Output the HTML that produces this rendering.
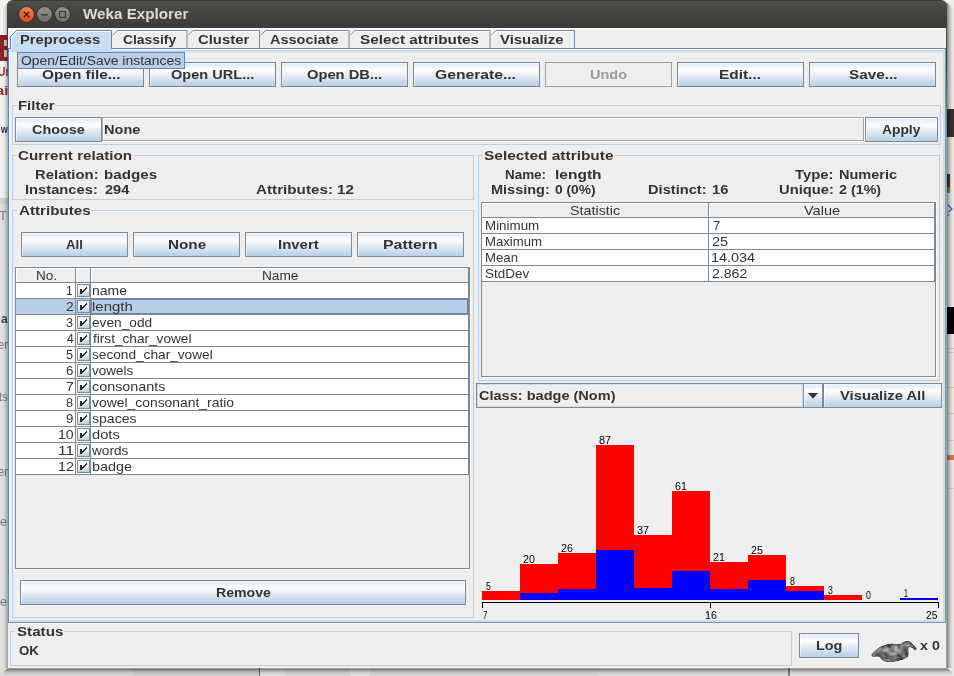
<!DOCTYPE html>
<html><head><meta charset="utf-8"><title>Weka Explorer</title>
<style>
html,body{margin:0;padding:0;}
body{width:954px;height:676px;position:relative;overflow:hidden;background:#f2f1f0;font-family:"Liberation Sans",sans-serif;}
div,span.t,svg{position:absolute;box-sizing:border-box;}
span.t{white-space:nowrap;line-height:20px;transform-origin:0 0;display:block;}
.btn{border:1px solid #7a8a99;background:linear-gradient(to bottom,#dde8f3 0%,#ffffff 30%,#dde8f3 60%,#b8cfe5 100%);}
.btn:after{content:"";position:absolute;left:0;top:0;right:0;bottom:0;border:1px solid rgba(255,255,255,.55);border-right-color:rgba(255,255,255,.0);border-bottom-color:rgba(255,255,255,0);}
.tb{border:1px solid #b8cfe5;}
</style></head><body>
<div style="left:0px;top:0px;width:954px;height:676px;background:#f3f2f1;"></div>
<div style="left:0px;top:198px;width:9px;height:6px;background:#d2d1cf;"></div>
<div style="left:0px;top:204px;width:9px;height:472px;background:#e1e0de;"></div>
<div style="left:0px;top:35px;width:9px;height:26px;background:#8b2626;"></div>
<div style="left:4px;top:40px;width:4px;height:6px;background:#d9c6c6;"></div>
<div style="left:4px;top:50px;width:4px;height:7px;background:#d9c6c6;"></div>
<span class="t" style="left:-2.49px;top:61.50px;font-size:13px;font-weight:bold;color:#9b2c2c;transform:scaleX(0.7926);">Ur</span>
<span class="t" style="left:-3.96px;top:80.50px;font-size:13px;font-weight:bold;color:#9b2c2c;transform:scaleX(1.1263);">ai</span>
<span class="t" style="left:0.60px;top:118.69px;font-size:11px;font-weight:bold;color:#2a2a4a;transform:scaleX(0.7882);">w</span>
<span class="t" style="left:-0.67px;top:206.34px;font-size:12px;font-weight:normal;color:#8a7a72;transform:scaleX(1.0667);">T</span>
<span class="t" style="left:0.64px;top:309.00px;font-size:13px;font-weight:bold;color:#444;transform:scaleX(0.9185);">a</span>
<span class="t" style="left:-1.83px;top:335.00px;font-size:13px;font-weight:normal;color:#777;transform:scaleX(0.8558);">er</span>
<span class="t" style="left:-1.12px;top:386.50px;font-size:13px;font-weight:normal;color:#777;transform:scaleX(0.8632);">ts</span>
<span class="t" style="left:-1.83px;top:461.50px;font-size:13px;font-weight:normal;color:#777;transform:scaleX(0.8558);">er</span>
<span class="t" style="left:0.10px;top:511.50px;font-size:13px;font-weight:normal;color:#777;transform:scaleX(0.9920);">e</span>
<span class="t" style="left:0.10px;top:592.00px;font-size:13px;font-weight:normal;color:#777;transform:scaleX(0.9920);">e</span>
<div style="left:946px;top:0px;width:8px;height:676px;background:#ececeb;"></div>
<div style="left:947px;top:109px;width:7px;height:28px;background:#333;"></div>
<div style="left:947px;top:174px;width:3px;height:7px;background:#1f3d7a;"></div>
<div style="left:947px;top:181px;width:3px;height:6px;background:#8b1a1a;"></div>
<div style="left:947px;top:187px;width:3px;height:6px;background:#5a9a2a;"></div>
<svg style="left:946px;top:204px" width="8" height="13" viewBox="0 0 8 13"><path d="M2 1 L6 5 L2.5 8 M2.5 10.5 v1.5" stroke="#3a5fae" stroke-width="1.2" fill="none"/></svg>
<div style="left:947px;top:307px;width:7px;height:27px;background:#000;"></div>
<div style="left:947px;top:348px;width:7px;height:1px;background:#cfcfce;"></div>
<div style="left:947px;top:352px;width:7px;height:1px;background:#cfcfce;"></div>
<div style="left:947px;top:387px;width:7px;height:1px;background:#cfcfce;"></div>
<div style="left:947px;top:413px;width:7px;height:1px;background:#cfcfce;"></div>
<div style="left:947px;top:440px;width:7px;height:1px;background:#cfcfce;"></div>
<div style="left:947px;top:488px;width:7px;height:1px;background:#cfcfce;"></div>
<div style="left:947px;top:455px;width:7px;height:5px;background:#e07848;"></div>
<div style="left:0px;top:668px;width:954px;height:8px;background:#dcdbda;"></div>
<div style="left:133px;top:668px;width:126px;height:8px;background:#d6d5d4;"></div>
<div style="left:259px;top:668px;width:1px;height:8px;background:#6a6a6a;"></div>
<div style="left:260px;top:668px;width:25px;height:8px;background:#e6e5e4;"></div>
<div style="left:350px;top:668px;width:20px;height:8px;background:#e6e5e4;"></div>
<div style="left:598px;top:668px;width:190px;height:8px;background:#e2e1e0;"></div>
<div style="left:788px;top:668px;width:2px;height:8px;background:#8a8988;"></div>
<div style="left:790px;top:668px;width:164px;height:8px;background:#e9e8e7;"></div>
<div style="left:7px;top:3px;width:1px;height:665px;background:rgba(0,0,0,0.25);"></div>
<div style="left:6px;top:4px;width:1px;height:664px;background:rgba(0,0,0,0.2);"></div>
<div style="left:5px;top:5px;width:1px;height:663px;background:rgba(0,0,0,0.12);"></div>
<div style="left:4px;top:6px;width:1px;height:662px;background:rgba(0,0,0,0.06);"></div>
<div style="left:3px;top:7px;width:1px;height:661px;background:rgba(0,0,0,0.03);"></div>
<div style="left:946px;top:3px;width:1px;height:665px;background:rgba(0,0,0,0.3);"></div>
<div style="left:947px;top:3px;width:1px;height:665px;background:rgba(0,0,0,0.41);"></div>
<div style="left:948px;top:4px;width:1px;height:664px;background:rgba(0,0,0,0.3);"></div>
<div style="left:949px;top:5px;width:1px;height:663px;background:rgba(0,0,0,0.21);"></div>
<div style="left:950px;top:6px;width:1px;height:662px;background:rgba(0,0,0,0.14);"></div>
<div style="left:951px;top:7px;width:1px;height:661px;background:rgba(0,0,0,0.08);"></div>
<div style="left:952px;top:8px;width:1px;height:660px;background:rgba(0,0,0,0.04);"></div>
<div style="left:953px;top:9px;width:1px;height:659px;background:rgba(0,0,0,0.015);"></div>
<div style="left:7px;top:668px;width:941px;height:1px;background:rgba(0,0,0,0.28);"></div>
<div style="left:6px;top:669px;width:943px;height:1px;background:rgba(0,0,0,0.42);"></div>
<div style="left:5px;top:670px;width:945px;height:1px;background:rgba(0,0,0,0.3);"></div>
<div style="left:4px;top:671px;width:947px;height:1px;background:rgba(0,0,0,0.2);"></div>
<div style="left:4px;top:672px;width:948px;height:1px;background:rgba(0,0,0,0.13);"></div>
<div style="left:4px;top:673px;width:949px;height:1px;background:rgba(0,0,0,0.08);"></div>
<div style="left:4px;top:674px;width:949px;height:1px;background:rgba(0,0,0,0.04);"></div>
<div style="left:4px;top:675px;width:949px;height:1px;background:rgba(0,0,0,0.02);"></div>
<div style="left:7px;top:0;width:940px;height:28px;border-radius:6px 6px 0 0;background:linear-gradient(to bottom,#4f4e49 0%,#474641 30%,#3c3b37 100%);border-top:1px solid #3a3935;"></div>
<div style="left:8px;top:28px;width:938px;height:640px;background:#eeeeee;"></div>
<div style="left:8px;top:28px;width:938px;height:2px;background:#fafafa;"></div>
<div style="left:945px;top:28px;width:1px;height:20px;background:#fbfbfb;"></div>
<div style="left:946px;top:27px;width:1px;height:120px;background:linear-gradient(to bottom,#46443f 0%,#46443f 30%,rgba(70,68,63,0) 100%);"></div>
<div style="left:7px;top:27px;width:1px;height:60px;background:linear-gradient(to bottom,#46443f 0%,#46443f 40%,rgba(70,68,63,0) 100%);"></div>
<svg style="left:16px;top:4px" width="60" height="22" viewBox="0 0 60 22"><defs><linearGradient id="gc" x1="0" y1="0" x2="0" y2="1"><stop offset="0" stop-color="#f37f52"/><stop offset="1" stop-color="#de4c1b"/></linearGradient><linearGradient id="gg" x1="0" y1="0" x2="0" y2="1"><stop offset="0" stop-color="#97958e"/><stop offset="1" stop-color="#6d6b65"/></linearGradient></defs><circle cx="10.5" cy="10.6" r="8.2" fill="#2f2e2a"/><circle cx="10.5" cy="10.5" r="7.4" fill="url(#gc)"/><path d="M7.8 7.8 L13.2 13.2 M13.2 7.8 L7.8 13.2" stroke="#3a1b10" stroke-width="1.25" fill="none"/><circle cx="28.5" cy="10.6" r="8.2" fill="#2f2e2a"/><circle cx="28.5" cy="10.5" r="7.4" fill="url(#gg)"/><path d="M25.3 10.8 H31.7" stroke="#3c3b37" stroke-width="1.4"/><circle cx="46.5" cy="10.6" r="8.2" fill="#2f2e2a"/><circle cx="46.5" cy="10.5" r="7.4" fill="url(#gg)"/><rect x="43.6" y="7.6" width="5.8" height="5.8" fill="none" stroke="#3c3b37" stroke-width="1.2"/></svg>
<span class="t" style="left:82.90px;top:4.30px;font-size:15px;font-weight:bold;color:#dfdbd2;transform:scaleX(1.0130);">Weka Explorer</span>
<div style="left:8px;top:48px;width:938px;height:575px;border:1px solid #6382bf;"></div>
<div style="left:9px;top:49px;width:936px;height:573px;border-top:3px solid #c8ddf2;border-right:2px solid #c8ddf2;border-bottom:2px solid #c8ddf2;border-left:1px solid #fff;"></div>
<div style="left:9px;top:49px;width:3px;height:1px;background:#fff;"></div>
<div style="left:112px;top:49px;width:832px;height:1px;background:#fff;"></div>
<div style="left:8px;top:622px;width:938px;height:1px;background:#8496ae;"></div>
<div style="left:945px;top:49px;width:1px;height:574px;background:#8496ae;"></div>
<svg style="left:0;top:28px" width="600" height="24" viewBox="0 28 600 24"><path d="M10.5 52 V36.5 L16.5 30.5 H111.5 V52 Z" fill="#c8ddf2" stroke="none"/><path d="M11.5 48.5 V37 L17 31.5 H111" fill="none" stroke="#fff" stroke-width="1"/><path d="M10.5 49 V36.5 L16.5 30.5 H111.5 V48.5" fill="none" stroke="#6382bf" stroke-width="1"/><path d="M113.5 36 L118 31.5 H186.5" fill="none" stroke="#fff" stroke-width="1"/><path d="M112.5 35.5 L117.5 30.5 H187.0 V48" fill="none" stroke="#7a8a99" stroke-width="1"/><path d="M189.0 36 L193.5 31.5 H259" fill="none" stroke="#fff" stroke-width="1"/><path d="M188.0 35.5 L193.0 30.5 H259.5 V48" fill="none" stroke="#7a8a99" stroke-width="1"/><path d="M261.5 36 L266 31.5 H348.5" fill="none" stroke="#fff" stroke-width="1"/><path d="M260.5 35.5 L265.5 30.5 H349.0 V48" fill="none" stroke="#7a8a99" stroke-width="1"/><path d="M351.0 36 L355.5 31.5 H489.5" fill="none" stroke="#fff" stroke-width="1"/><path d="M350.0 35.5 L355.0 30.5 H490.0 V48" fill="none" stroke="#7a8a99" stroke-width="1"/><path d="M492.0 36 L496.5 31.5 H574" fill="none" stroke="#fff" stroke-width="1"/><path d="M491.0 35.5 L496.0 30.5 H574.5 V48" fill="none" stroke="#7a8a99" stroke-width="1"/></svg>
<span class="t" style="left:20.05px;top:29.50px;font-size:13px;font-weight:bold;color:#333;transform:scaleX(1.1309);">Preprocess</span>
<span class="t" style="left:122.97px;top:29.50px;font-size:13px;font-weight:bold;color:#333;transform:scaleX(1.0660);">Classify</span>
<span class="t" style="left:198.03px;top:29.50px;font-size:13px;font-weight:bold;color:#333;transform:scaleX(1.1432);">Cluster</span>
<span class="t" style="left:269.62px;top:29.50px;font-size:13px;font-weight:bold;color:#333;transform:scaleX(1.1144);">Associate</span>
<span class="t" style="left:360.01px;top:29.50px;font-size:13px;font-weight:bold;color:#333;transform:scaleX(1.1770);">Select attributes</span>
<span class="t" style="left:500.31px;top:29.50px;font-size:13px;font-weight:bold;color:#333;transform:scaleX(1.1452);">Visualize</span>
<div class="btn" style="left:17px;top:62px;width:127px;height:25px;"></div>
<span class="t" style="left:41.51px;top:64.50px;font-size:13px;font-weight:bold;color:#333;transform:scaleX(1.1831);">Open file...</span>
<div class="btn" style="left:149px;top:62px;width:127px;height:25px;"></div>
<span class="t" style="left:171.04px;top:64.50px;font-size:13px;font-weight:bold;color:#333;transform:scaleX(1.1192);">Open URL...</span>
<div class="btn" style="left:281px;top:62px;width:127px;height:25px;"></div>
<span class="t" style="left:306.63px;top:64.50px;font-size:13px;font-weight:bold;color:#333;transform:scaleX(1.1308);">Open DB...</span>
<div class="btn" style="left:413px;top:62px;width:127px;height:25px;"></div>
<span class="t" style="left:435.00px;top:64.50px;font-size:13px;font-weight:bold;color:#333;transform:scaleX(1.2046);">Generate...</span>
<div style="left:545px;top:62px;width:127px;height:25px;background:#eeeeee;border:1px solid #9aa0a6;"></div>
<span class="t" style="left:589.76px;top:64.50px;font-size:13px;font-weight:bold;color:#999;transform:scaleX(1.1156);">Undo</span>
<div class="btn" style="left:677px;top:62px;width:127px;height:25px;"></div>
<span class="t" style="left:719.21px;top:64.50px;font-size:13px;font-weight:bold;color:#333;transform:scaleX(1.1852);">Edit...</span>
<div class="btn" style="left:809px;top:62px;width:127px;height:25px;"></div>
<span class="t" style="left:848.61px;top:64.50px;font-size:13px;font-weight:bold;color:#333;transform:scaleX(1.1748);">Save...</span>
<div style="left:17px;top:52px;width:168px;height:17px;background:#b8cfe5;border:1px solid #6382bf;"></div>
<span class="t" style="left:21.30px;top:50.50px;font-size:13px;font-weight:normal;color:#333;transform:scaleX(1.0705);">Open/Edit/Save instances</span>
<div class="tb" style="left:12px;top:105px;width:929px;height:40px;"></div>
<div style="left:17px;top:98px;width:38px;height:14px;background:#eee;"></div>
<span class="t" style="left:18.14px;top:95.50px;font-size:13px;font-weight:bold;color:#333;transform:scaleX(1.1480);">Filter</span>
<div class="btn" style="left:15px;top:117px;width:87px;height:25px;"></div>
<span class="t" style="left:31.75px;top:119.50px;font-size:13px;font-weight:bold;color:#333;transform:scaleX(1.1059);">Choose</span>
<div style="left:103px;top:118px;width:762px;height:24px;border:1px solid #fff;"></div>
<div style="left:102px;top:117px;width:762px;height:24px;border:1px solid #a3a3a3;"></div>
<span class="t" style="left:103.76px;top:119.50px;font-size:13px;font-weight:bold;color:#333;transform:scaleX(1.1200);">None</span>
<div class="btn" style="left:865px;top:117px;width:73px;height:25px;"></div>
<span class="t" style="left:882.33px;top:119.50px;font-size:13px;font-weight:bold;color:#333;transform:scaleX(1.0629);">Apply</span>
<div class="tb" style="left:12px;top:155px;width:462px;height:45px;"></div>
<div style="left:17px;top:148px;width:116px;height:14px;background:#eee;"></div>
<span class="t" style="left:18.42px;top:145.50px;font-size:13px;font-weight:bold;color:#333;transform:scaleX(1.1699);">Current relation</span>
<span class="t" style="left:34.94px;top:164.50px;font-size:13px;font-weight:bold;color:#333;transform:scaleX(1.1442);">Relation:</span>
<span class="t" style="left:104.22px;top:164.50px;font-size:13px;font-weight:bold;color:#333;transform:scaleX(1.1684);">badges</span>
<span class="t" style="left:24.95px;top:180.00px;font-size:13px;font-weight:bold;color:#333;transform:scaleX(1.1325);">Instances:</span>
<span class="t" style="left:104.54px;top:180.00px;font-size:13px;font-weight:bold;color:#333;transform:scaleX(1.1190);">294</span>
<span class="t" style="left:255.51px;top:180.00px;font-size:13px;font-weight:bold;color:#333;transform:scaleX(1.1720);">Attributes:</span>
<span class="t" style="left:336.72px;top:180.00px;font-size:13px;font-weight:bold;color:#333;transform:scaleX(1.1698);">12</span>
<div class="tb" style="left:12px;top:210px;width:462px;height:408px;"></div>
<div style="left:17px;top:203px;width:74px;height:14px;background:#eee;"></div>
<span class="t" style="left:18.71px;top:200.50px;font-size:13px;font-weight:bold;color:#333;transform:scaleX(1.1669);">Attributes</span>
<div class="btn" style="left:21px;top:232px;width:107px;height:25px;"></div>
<span class="t" style="left:66.35px;top:234.50px;font-size:13px;font-weight:bold;color:#333;transform:scaleX(1.0129);">All</span>
<div class="btn" style="left:133px;top:232px;width:107px;height:25px;"></div>
<span class="t" style="left:167.72px;top:234.50px;font-size:13px;font-weight:bold;color:#333;transform:scaleX(1.1744);">None</span>
<div class="btn" style="left:245px;top:232px;width:107px;height:25px;"></div>
<span class="t" style="left:277.74px;top:234.50px;font-size:13px;font-weight:bold;color:#333;transform:scaleX(1.1507);">Invert</span>
<div class="btn" style="left:357px;top:232px;width:107px;height:25px;"></div>
<span class="t" style="left:382.69px;top:234.50px;font-size:13px;font-weight:bold;color:#333;transform:scaleX(1.2185);">Pattern</span>
<div style="left:16px;top:268px;width:455px;height:302px;border:1px solid #fbfbfb;"></div>
<div style="left:15px;top:267px;width:455px;height:302px;background:#eee;border:1px solid #7a8a99;"></div>
<div style="left:16px;top:268px;width:453px;height:15px;background:#eee;"></div>
<div style="left:16px;top:283px;width:453px;height:15px;background:#fff;"></div>
<div style="left:16px;top:298px;width:453px;height:1px;background:#7a8a99;"></div>
<div style="left:16px;top:299px;width:453px;height:15px;background:#b8cfe5;"></div>
<div style="left:16px;top:314px;width:453px;height:1px;background:#7a8a99;"></div>
<div style="left:16px;top:315px;width:453px;height:15px;background:#fff;"></div>
<div style="left:16px;top:330px;width:453px;height:1px;background:#7a8a99;"></div>
<div style="left:16px;top:331px;width:453px;height:15px;background:#fff;"></div>
<div style="left:16px;top:346px;width:453px;height:1px;background:#7a8a99;"></div>
<div style="left:16px;top:347px;width:453px;height:15px;background:#fff;"></div>
<div style="left:16px;top:362px;width:453px;height:1px;background:#7a8a99;"></div>
<div style="left:16px;top:363px;width:453px;height:15px;background:#fff;"></div>
<div style="left:16px;top:378px;width:453px;height:1px;background:#7a8a99;"></div>
<div style="left:16px;top:379px;width:453px;height:15px;background:#fff;"></div>
<div style="left:16px;top:394px;width:453px;height:1px;background:#7a8a99;"></div>
<div style="left:16px;top:395px;width:453px;height:15px;background:#fff;"></div>
<div style="left:16px;top:410px;width:453px;height:1px;background:#7a8a99;"></div>
<div style="left:16px;top:411px;width:453px;height:15px;background:#fff;"></div>
<div style="left:16px;top:426px;width:453px;height:1px;background:#7a8a99;"></div>
<div style="left:16px;top:427px;width:453px;height:15px;background:#fff;"></div>
<div style="left:16px;top:442px;width:453px;height:1px;background:#7a8a99;"></div>
<div style="left:16px;top:443px;width:453px;height:15px;background:#fff;"></div>
<div style="left:16px;top:458px;width:453px;height:1px;background:#7a8a99;"></div>
<div style="left:16px;top:459px;width:453px;height:15px;background:#fff;"></div>
<div style="left:16px;top:474px;width:453px;height:1px;background:#7a8a99;"></div>
<div style="left:16px;top:282px;width:453px;height:1px;background:#7a8a99;"></div>
<div style="left:75px;top:268px;width:1px;height:207px;background:#7a8a99;"></div>
<div style="left:90px;top:268px;width:1px;height:207px;background:#7a8a99;"></div>
<div style="left:468px;top:268px;width:1px;height:207px;background:#7a8a99;"></div>
<div style="left:16px;top:268px;width:59px;height:1px;background:#fff;"></div>
<div style="left:76px;top:268px;width:14px;height:1px;background:#fff;"></div>
<div style="left:91px;top:268px;width:377px;height:1px;background:#fff;"></div>
<div style="left:16px;top:268px;width:1px;height:14px;background:#fff;"></div>
<div style="left:76px;top:268px;width:1px;height:14px;background:#fff;"></div>
<div style="left:91px;top:268px;width:1px;height:14px;background:#fff;"></div>
<span class="t" style="left:36.06px;top:265.80px;font-size:13px;font-weight:normal;color:#333;transform:scaleX(1.0389);">No.</span>
<span class="t" style="left:261.55px;top:265.80px;font-size:13px;font-weight:normal;color:#333;transform:scaleX(1.0515);">Name</span>
<div class="btn" style="left:77px;top:284px;width:13px;height:13px;"></div>
<svg style="left:77px;top:284px" width="13" height="13" viewBox="0 0 13 13" shape-rendering="crispEdges"><path d="M3 5h2v5h-2z M5 7h1v2h-1z M6 6h1v2h-1z M7 5h1v2h-1z M8 4h1v2h-1z M9 3h1v2h-1z" fill="#2a2a2a"/></svg>
<div class="btn" style="left:77px;top:300px;width:13px;height:13px;"></div>
<svg style="left:77px;top:300px" width="13" height="13" viewBox="0 0 13 13" shape-rendering="crispEdges"><path d="M3 5h2v5h-2z M5 7h1v2h-1z M6 6h1v2h-1z M7 5h1v2h-1z M8 4h1v2h-1z M9 3h1v2h-1z" fill="#2a2a2a"/></svg>
<div class="btn" style="left:77px;top:316px;width:13px;height:13px;"></div>
<svg style="left:77px;top:316px" width="13" height="13" viewBox="0 0 13 13" shape-rendering="crispEdges"><path d="M3 5h2v5h-2z M5 7h1v2h-1z M6 6h1v2h-1z M7 5h1v2h-1z M8 4h1v2h-1z M9 3h1v2h-1z" fill="#2a2a2a"/></svg>
<div class="btn" style="left:77px;top:332px;width:13px;height:13px;"></div>
<svg style="left:77px;top:332px" width="13" height="13" viewBox="0 0 13 13" shape-rendering="crispEdges"><path d="M3 5h2v5h-2z M5 7h1v2h-1z M6 6h1v2h-1z M7 5h1v2h-1z M8 4h1v2h-1z M9 3h1v2h-1z" fill="#2a2a2a"/></svg>
<div class="btn" style="left:77px;top:348px;width:13px;height:13px;"></div>
<svg style="left:77px;top:348px" width="13" height="13" viewBox="0 0 13 13" shape-rendering="crispEdges"><path d="M3 5h2v5h-2z M5 7h1v2h-1z M6 6h1v2h-1z M7 5h1v2h-1z M8 4h1v2h-1z M9 3h1v2h-1z" fill="#2a2a2a"/></svg>
<div class="btn" style="left:77px;top:364px;width:13px;height:13px;"></div>
<svg style="left:77px;top:364px" width="13" height="13" viewBox="0 0 13 13" shape-rendering="crispEdges"><path d="M3 5h2v5h-2z M5 7h1v2h-1z M6 6h1v2h-1z M7 5h1v2h-1z M8 4h1v2h-1z M9 3h1v2h-1z" fill="#2a2a2a"/></svg>
<div class="btn" style="left:77px;top:380px;width:13px;height:13px;"></div>
<svg style="left:77px;top:380px" width="13" height="13" viewBox="0 0 13 13" shape-rendering="crispEdges"><path d="M3 5h2v5h-2z M5 7h1v2h-1z M6 6h1v2h-1z M7 5h1v2h-1z M8 4h1v2h-1z M9 3h1v2h-1z" fill="#2a2a2a"/></svg>
<div class="btn" style="left:77px;top:396px;width:13px;height:13px;"></div>
<svg style="left:77px;top:396px" width="13" height="13" viewBox="0 0 13 13" shape-rendering="crispEdges"><path d="M3 5h2v5h-2z M5 7h1v2h-1z M6 6h1v2h-1z M7 5h1v2h-1z M8 4h1v2h-1z M9 3h1v2h-1z" fill="#2a2a2a"/></svg>
<div class="btn" style="left:77px;top:412px;width:13px;height:13px;"></div>
<svg style="left:77px;top:412px" width="13" height="13" viewBox="0 0 13 13" shape-rendering="crispEdges"><path d="M3 5h2v5h-2z M5 7h1v2h-1z M6 6h1v2h-1z M7 5h1v2h-1z M8 4h1v2h-1z M9 3h1v2h-1z" fill="#2a2a2a"/></svg>
<div class="btn" style="left:77px;top:428px;width:13px;height:13px;"></div>
<svg style="left:77px;top:428px" width="13" height="13" viewBox="0 0 13 13" shape-rendering="crispEdges"><path d="M3 5h2v5h-2z M5 7h1v2h-1z M6 6h1v2h-1z M7 5h1v2h-1z M8 4h1v2h-1z M9 3h1v2h-1z" fill="#2a2a2a"/></svg>
<div class="btn" style="left:77px;top:444px;width:13px;height:13px;"></div>
<svg style="left:77px;top:444px" width="13" height="13" viewBox="0 0 13 13" shape-rendering="crispEdges"><path d="M3 5h2v5h-2z M5 7h1v2h-1z M6 6h1v2h-1z M7 5h1v2h-1z M8 4h1v2h-1z M9 3h1v2h-1z" fill="#2a2a2a"/></svg>
<div class="btn" style="left:77px;top:460px;width:13px;height:13px;"></div>
<svg style="left:77px;top:460px" width="13" height="13" viewBox="0 0 13 13" shape-rendering="crispEdges"><path d="M3 5h2v5h-2z M5 7h1v2h-1z M6 6h1v2h-1z M7 5h1v2h-1z M8 4h1v2h-1z M9 3h1v2h-1z" fill="#2a2a2a"/></svg>
<div style="left:91px;top:299px;width:377px;height:15px;border:1px solid #6382bf;"></div>
<span class="t" style="left:66.27px;top:280.50px;font-size:13px;font-weight:normal;color:#333;transform:scaleX(0.9273);">1</span>
<span class="t" style="left:66.00px;top:296.50px;font-size:13px;font-weight:normal;color:#333;transform:scaleX(1.0609);">2</span>
<span class="t" style="left:66.31px;top:312.50px;font-size:13px;font-weight:normal;color:#333;transform:scaleX(0.9760);">3</span>
<span class="t" style="left:66.57px;top:328.50px;font-size:13px;font-weight:normal;color:#333;transform:scaleX(0.9385);">4</span>
<span class="t" style="left:66.31px;top:344.50px;font-size:13px;font-weight:normal;color:#333;transform:scaleX(0.9760);">5</span>
<span class="t" style="left:66.04px;top:360.50px;font-size:13px;font-weight:normal;color:#333;transform:scaleX(1.0167);">6</span>
<span class="t" style="left:66.00px;top:376.50px;font-size:13px;font-weight:normal;color:#333;transform:scaleX(1.0609);">7</span>
<span class="t" style="left:66.31px;top:392.50px;font-size:13px;font-weight:normal;color:#333;transform:scaleX(0.9760);">8</span>
<span class="t" style="left:66.29px;top:408.50px;font-size:13px;font-weight:normal;color:#333;transform:scaleX(1.0167);">9</span>
<span class="t" style="left:57.72px;top:424.50px;font-size:13px;font-weight:normal;color:#333;transform:scaleX(1.0846);">10</span>
<span class="t" style="left:57.60px;top:440.50px;font-size:13px;font-weight:normal;color:#333;transform:scaleX(1.2000);">11</span>
<span class="t" style="left:57.69px;top:456.50px;font-size:13px;font-weight:normal;color:#333;transform:scaleX(1.1059);">12</span>
<span class="t" style="left:91.73px;top:280.50px;font-size:13px;font-weight:normal;color:#333;transform:scaleX(1.0742);">name</span>
<span class="t" style="left:91.65px;top:296.50px;font-size:13px;font-weight:normal;color:#333;transform:scaleX(1.1493);">length</span>
<span class="t" style="left:92.27px;top:312.50px;font-size:13px;font-weight:normal;color:#333;transform:scaleX(1.0529);">even_odd</span>
<span class="t" style="left:92.54px;top:328.50px;font-size:13px;font-weight:normal;color:#333;transform:scaleX(1.0480);">first_char_vowel</span>
<span class="t" style="left:92.37px;top:344.50px;font-size:13px;font-weight:normal;color:#333;transform:scaleX(1.0502);">second_char_vowel</span>
<span class="t" style="left:91.94px;top:360.50px;font-size:13px;font-weight:normal;color:#333;transform:scaleX(1.0359);">vowels</span>
<span class="t" style="left:92.35px;top:376.50px;font-size:13px;font-weight:normal;color:#333;transform:scaleX(1.1053);">consonants</span>
<span class="t" style="left:91.93px;top:392.50px;font-size:13px;font-weight:normal;color:#333;transform:scaleX(1.0684);">vowel_consonant_ratio</span>
<span class="t" style="left:92.36px;top:408.50px;font-size:13px;font-weight:normal;color:#333;transform:scaleX(1.0807);">spaces</span>
<span class="t" style="left:92.33px;top:424.50px;font-size:13px;font-weight:normal;color:#333;transform:scaleX(1.1319);">dots</span>
<span class="t" style="left:92.40px;top:440.50px;font-size:13px;font-weight:normal;color:#333;transform:scaleX(1.0482);">words</span>
<span class="t" style="left:92.07px;top:456.50px;font-size:13px;font-weight:normal;color:#333;transform:scaleX(1.1079);">badge</span>
<div class="btn" style="left:20px;top:580px;width:446px;height:25px;"></div>
<span class="t" style="left:215.79px;top:582.50px;font-size:13px;font-weight:bold;color:#333;transform:scaleX(1.0848);">Remove</span>
<div class="tb" style="left:478px;top:155px;width:462px;height:226px;"></div>
<div style="left:483px;top:148px;width:132px;height:14px;background:#eee;"></div>
<span class="t" style="left:484.01px;top:145.50px;font-size:13px;font-weight:bold;color:#333;transform:scaleX(1.1871);">Selected attribute</span>
<span class="t" style="left:505.03px;top:164.50px;font-size:13px;font-weight:bold;color:#333;transform:scaleX(1.0331);">Name:</span>
<span class="t" style="left:554.91px;top:164.50px;font-size:13px;font-weight:bold;color:#333;transform:scaleX(1.1946);">length</span>
<span class="t" style="left:795.31px;top:164.50px;font-size:13px;font-weight:bold;color:#333;transform:scaleX(1.1442);">Type:</span>
<span class="t" style="left:838.76px;top:164.50px;font-size:13px;font-weight:bold;color:#333;transform:scaleX(1.1172);">Numeric</span>
<span class="t" style="left:491.17px;top:180.00px;font-size:13px;font-weight:bold;color:#333;transform:scaleX(1.1133);">Missing:</span>
<span class="t" style="left:555.37px;top:180.00px;font-size:13px;font-weight:bold;color:#333;transform:scaleX(1.0595);">0 (0%)</span>
<span class="t" style="left:648.36px;top:180.00px;font-size:13px;font-weight:bold;color:#333;transform:scaleX(1.1260);">Distinct:</span>
<span class="t" style="left:711.75px;top:180.00px;font-size:13px;font-weight:bold;color:#333;transform:scaleX(1.1321);">16</span>
<span class="t" style="left:778.75px;top:180.00px;font-size:13px;font-weight:bold;color:#333;transform:scaleX(1.1333);">Unique:</span>
<span class="t" style="left:839.05px;top:180.00px;font-size:13px;font-weight:bold;color:#333;transform:scaleX(1.1000);">2 (1%)</span>
<div style="left:482px;top:203px;width:455px;height:175px;border:1px solid #fbfbfb;"></div>
<div style="left:481px;top:202px;width:455px;height:175px;background:#eee;border:1px solid #7a8a99;"></div>
<div style="left:482px;top:218px;width:453px;height:15px;background:#fff;"></div>
<div style="left:482px;top:233px;width:453px;height:1px;background:#7a8a99;"></div>
<div style="left:482px;top:234px;width:453px;height:15px;background:#fff;"></div>
<div style="left:482px;top:249px;width:453px;height:1px;background:#7a8a99;"></div>
<div style="left:482px;top:250px;width:453px;height:15px;background:#fff;"></div>
<div style="left:482px;top:265px;width:453px;height:1px;background:#7a8a99;"></div>
<div style="left:482px;top:266px;width:453px;height:15px;background:#fff;"></div>
<div style="left:482px;top:281px;width:453px;height:1px;background:#7a8a99;"></div>
<div style="left:482px;top:217px;width:453px;height:1px;background:#7a8a99;"></div>
<div style="left:708px;top:203px;width:1px;height:79px;background:#7a8a99;"></div>
<div style="left:934px;top:203px;width:1px;height:79px;background:#7a8a99;"></div>
<div style="left:482px;top:203px;width:226px;height:1px;background:#fff;"></div>
<div style="left:709px;top:203px;width:225px;height:1px;background:#fff;"></div>
<div style="left:482px;top:203px;width:1px;height:14px;background:#fff;"></div>
<div style="left:709px;top:203px;width:1px;height:14px;background:#fff;"></div>
<span class="t" style="left:570.27px;top:200.80px;font-size:13px;font-weight:normal;color:#333;transform:scaleX(1.1006);">Statistic</span>
<span class="t" style="left:804.32px;top:200.80px;font-size:13px;font-weight:normal;color:#333;transform:scaleX(1.1175);">Value</span>
<span class="t" style="left:485.07px;top:216.00px;font-size:13px;font-weight:normal;color:#333;transform:scaleX(1.0286);">Minimum</span>
<span class="t" style="left:712.86px;top:216.00px;font-size:13px;font-weight:normal;color:#333;transform:scaleX(0.9913);">7</span>
<span class="t" style="left:485.09px;top:232.00px;font-size:13px;font-weight:normal;color:#333;transform:scaleX(1.0128);">Maximum</span>
<span class="t" style="left:711.77px;top:232.00px;font-size:13px;font-weight:normal;color:#333;transform:scaleX(1.1094);">25</span>
<span class="t" style="left:485.09px;top:248.00px;font-size:13px;font-weight:normal;color:#333;transform:scaleX(1.0146);">Mean</span>
<span class="t" style="left:711.49px;top:248.00px;font-size:13px;font-weight:normal;color:#333;transform:scaleX(1.1091);">14.034</span>
<span class="t" style="left:485.32px;top:264.00px;font-size:13px;font-weight:normal;color:#333;transform:scaleX(1.0347);">StdDev</span>
<span class="t" style="left:711.79px;top:264.00px;font-size:13px;font-weight:normal;color:#333;transform:scaleX(1.0848);">2.862</span>
<div style="left:476px;top:383px;width:347px;height:25px;background:#eee;border:1px solid #7a8a99;"></div>
<div style="left:477px;top:384px;width:326px;height:23px;background:#eee;border:1px solid #cbdcee;"></div>
<div class="btn" style="left:803px;top:383px;width:20px;height:25px;"></div>
<svg style="left:807px;top:392px" width="12" height="8" viewBox="0 0 12 8"><path d="M0.8 1 H11.2 L6 6.4 Z" fill="#333"/></svg>
<span class="t" style="left:478.94px;top:385.80px;font-size:13px;font-weight:bold;color:#333;transform:scaleX(1.1182);">Class: badge (Nom)</span>
<div class="btn" style="left:823px;top:383px;width:119px;height:25px;"></div>
<span class="t" style="left:840.42px;top:385.80px;font-size:13px;font-weight:bold;color:#333;transform:scaleX(1.1351);">Visualize All</span>
<div style="left:482px;top:591px;width:38px;height:9px;background:#ff0000;"></div>
<span class="t" style="left:485.87px;top:576.97px;font-size:10.2px;font-weight:normal;color:#000;transform:scaleX(0.8632);">5</span>
<div style="left:520px;top:564px;width:38px;height:36px;background:#ff0000;"></div>
<div style="left:520px;top:593px;width:38px;height:7px;background:#0000ff;"></div>
<span class="t" style="left:523.18px;top:549.97px;font-size:10.2px;font-weight:normal;color:#000;transform:scaleX(1.0476);">20</span>
<div style="left:558px;top:553px;width:38px;height:47px;background:#ff0000;"></div>
<div style="left:558px;top:589px;width:38px;height:11px;background:#0000ff;"></div>
<span class="t" style="left:561.18px;top:538.97px;font-size:10.2px;font-weight:normal;color:#000;transform:scaleX(1.0476);">26</span>
<div style="left:596px;top:445px;width:38px;height:155px;background:#ff0000;"></div>
<div style="left:596px;top:550px;width:38px;height:50px;background:#0000ff;"></div>
<span class="t" style="left:599.16px;top:430.97px;font-size:10.2px;font-weight:normal;color:#000;transform:scaleX(1.0732);">87</span>
<div style="left:634px;top:535px;width:38px;height:65px;background:#ff0000;"></div>
<div style="left:634px;top:588px;width:38px;height:12px;background:#0000ff;"></div>
<span class="t" style="left:637.16px;top:520.97px;font-size:10.2px;font-weight:normal;color:#000;transform:scaleX(1.0732);">37</span>
<div style="left:672px;top:491px;width:38px;height:109px;background:#ff0000;"></div>
<div style="left:672px;top:571px;width:38px;height:29px;background:#0000ff;"></div>
<span class="t" style="left:675.18px;top:476.97px;font-size:10.2px;font-weight:normal;color:#000;transform:scaleX(1.0476);">61</span>
<div style="left:710px;top:562px;width:38px;height:38px;background:#ff0000;"></div>
<div style="left:710px;top:589px;width:38px;height:11px;background:#0000ff;"></div>
<span class="t" style="left:713.18px;top:547.97px;font-size:10.2px;font-weight:normal;color:#000;transform:scaleX(1.0476);">21</span>
<div style="left:748px;top:555px;width:38px;height:45px;background:#ff0000;"></div>
<div style="left:748px;top:580px;width:38px;height:20px;background:#0000ff;"></div>
<span class="t" style="left:751.18px;top:540.97px;font-size:10.2px;font-weight:normal;color:#000;transform:scaleX(1.0476);">25</span>
<div style="left:786px;top:586px;width:38px;height:14px;background:#ff0000;"></div>
<div style="left:786px;top:591px;width:38px;height:9px;background:#0000ff;"></div>
<span class="t" style="left:789.87px;top:571.97px;font-size:10.2px;font-weight:normal;color:#000;transform:scaleX(0.8632);">8</span>
<div style="left:824px;top:595px;width:38px;height:5px;background:#ff0000;"></div>
<span class="t" style="left:827.87px;top:580.97px;font-size:10.2px;font-weight:normal;color:#000;transform:scaleX(0.8632);">3</span>
<span class="t" style="left:865.87px;top:585.97px;font-size:10.2px;font-weight:normal;color:#000;transform:scaleX(0.8632);">0</span>
<div style="left:900px;top:598px;width:38px;height:2px;background:#0000ff;"></div>
<span class="t" style="left:904.28px;top:583.97px;font-size:10.2px;font-weight:normal;color:#000;transform:scaleX(0.6889);">1</span>
<div style="left:482px;top:602px;width:457px;height:1px;background:#000;"></div>
<div style="left:482px;top:602px;width:1px;height:6px;background:#000;"></div>
<div style="left:710px;top:602px;width:1px;height:6px;background:#000;"></div>
<div style="left:938px;top:602px;width:1px;height:6px;background:#000;"></div>
<span class="t" style="left:483.01px;top:605.67px;font-size:10.2px;font-weight:normal;color:#000;transform:scaleX(0.7789);">7</span>
<span class="t" style="left:705.12px;top:605.67px;font-size:10.2px;font-weight:normal;color:#000;transform:scaleX(1.0439);">16</span>
<span class="t" style="left:926.40px;top:605.67px;font-size:10.2px;font-weight:normal;color:#000;transform:scaleX(1.0095);">25</span>
<div class="tb" style="left:10px;top:631px;width:782px;height:35px;"></div>
<div style="left:15px;top:624px;width:49px;height:14px;background:#eee;"></div>
<span class="t" style="left:16.52px;top:621.50px;font-size:13px;font-weight:bold;color:#333;transform:scaleX(1.1665);">Status</span>
<span class="t" style="left:18.59px;top:640.50px;font-size:13px;font-weight:bold;color:#333;transform:scaleX(1.0240);">OK</span>
<div class="btn" style="left:799px;top:633px;width:60px;height:25px;"></div>
<span class="t" style="left:815.77px;top:635.50px;font-size:13px;font-weight:bold;color:#333;transform:scaleX(1.1056);">Log</span>
<span class="t" style="left:920.13px;top:635.50px;font-size:13px;font-weight:bold;color:#333;transform:scaleX(1.0957);">x 0</span>
<svg style="left:868px;top:638px" width="52" height="26" viewBox="0 0 52 26"><defs><filter id="bf" x="-5%" y="-10%" width="110%" height="120%" color-interpolation-filters="sRGB"><feGaussianBlur in="SourceGraphic" stdDeviation="0.5" result="base"/><feTurbulence type="fractalNoise" baseFrequency="0.2" numOctaves="2" seed="5" result="nz"/><feColorMatrix in="nz" type="matrix" values="0.7 0 0 0 0.15  0.7 0 0 0 0.15  0.7 0 0 0 0.15  0 0 0 0 1" result="ng"/><feComposite in="base" in2="ng" operator="arithmetic" k1="2" k2="0" k3="0" k4="0" result="tex"/><feGaussianBlur in="tex" stdDeviation="0.45"/></filter></defs><g filter="url(#bf)"><path d="M4 16.6 L8.6 12 L12.8 9.1 L17.8 7.2 L23.7 6.2 L29.5 6.6 L32.9 6.6 L35.4 4.5 L38.8 3.6 L42.1 4.2 L45.5 7.4 L48 10.8 L47.6 11.8 L44.6 9.5 L41.7 8.3 L39.6 10.8 L40 15 L39.6 18.3 L35.4 20.8 L29.5 22.5 L22.8 23.5 L17 22.9 L13.6 20.8 L11.1 17.9 L4.4 18.1 Z" fill="#6c6c6c" stroke="#6c6c6c" stroke-width=".6" stroke-linejoin="round"/><path d="M15 12 C18 9 24 8 30 8.2 C33 8 35 9 36 11 C35 14 32 16.5 27 17.5 C22 18.5 17 17.5 15 15 Z" fill="#8e8e8e" opacity=".8"/><path d="M36.5 5.3 C39 4.8 41 5.3 42.8 7 C41 8 39 8.5 37 8.2 Z" fill="#969696" opacity=".85"/><path d="M12.5 17.5 C16 21 22 22.8 28 22.3 C33 21.8 37 20.3 39.8 17.5 C36 19.5 31 20 26 20 C21 20 16 19.5 12.5 17.5 Z" fill="#444" opacity=".7"/><path d="M37 11 C38.5 13 39 15.5 38 18" stroke="#3a3a3a" stroke-width="1.5" fill="none" opacity=".7"/></g></svg>
</body></html>
